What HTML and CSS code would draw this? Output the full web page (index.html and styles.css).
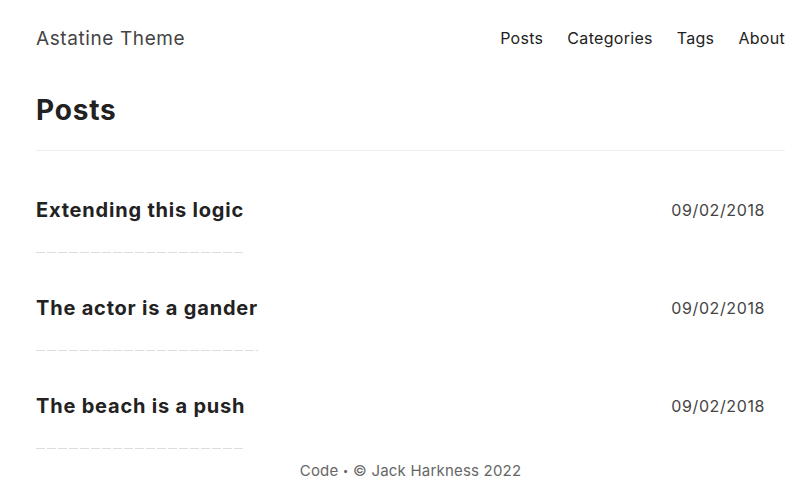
FILE: index.html
```html
<!DOCTYPE html>
<html>
<head>
<meta charset="utf-8">
<link rel="stylesheet" href="styles.css">
</head>
<body>
<div class="page">
  <header class="site-header">
    <a class="brand" href="#">Astatine Theme</a>
    <nav class="nav">
      <a href="#">Posts</a>
      <a href="#">Categories</a>
      <a href="#">Tags</a>
      <a href="#">About</a>
    </nav>
  </header>
  <main>
    <h1 class="page-title">Posts</h1>
    <ul class="post-list">
      <li class="post">
        <div class="post-main"><a class="post-title" href="#">Extending this logic</a></div>
        <span class="post-date">09/02/2018</span>
      </li>
      <li class="post">
        <div class="post-main"><a class="post-title" href="#">The actor is a gander</a></div>
        <span class="post-date">09/02/2018</span>
      </li>
      <li class="post">
        <div class="post-main"><a class="post-title" href="#">The beach is a push</a></div>
        <span class="post-date">09/02/2018</span>
      </li>
    </ul>
  </main>
  <footer class="site-footer"><a href="#">Code</a> <span class="dot">•</span> © Jack Harkness 2022</footer>
</div>
</body>
</html>
```

FILE: styles.css
```css
* { box-sizing: border-box; }
html, body { margin: 0; padding: 0; background: #fff; }
body {
  font-family: Inter, "Noto Sans", sans-serif;
  color: #222;
}
a { text-decoration: none; color: inherit; }
.page {
  padding: 0 22px 0 36px;
}
.site-header {
  height: 76px;
  display: flex;
  align-items: center;
  justify-content: space-between;
}
.brand {
  font-size: 19px;
  color: #444;
  letter-spacing: 0.6px;
}
.nav {
  display: flex;
  gap: 24px;
  font-size: 16px;
  letter-spacing: 0.3px;
  color: #222;
}
.page-title {
  margin: 0;
  padding: 16px 0 22px;
  font-size: 28px;
  font-weight: 700;
  line-height: 36px;
  letter-spacing: 0.8px;
  border-bottom: 1px solid #eee;
}
.post-list {
  list-style: none;
  margin: 0;
  padding: 0;
}
.post {
  display: flex;
  justify-content: space-between;
  align-items: flex-start;
  height: 98px;
  padding-top: 45px;
}
.post-main { display: flex; }
.post-title {
  font-size: 20px;
  font-weight: 700;
  line-height: 28px;
  letter-spacing: 0.8px;
  padding-bottom: 29px;
  background-image: repeating-linear-gradient(to right, #ddd 0 9px, transparent 9px 11px);
  background-size: 100% 1px;
  background-position: left bottom;
  background-repeat: no-repeat;
}
.post-date {
  font-size: 16px;
  line-height: 28px;
  letter-spacing: 0.6px;
  color: #444;
  margin-right: 20px;
}
.site-footer {
  text-align: center;
  font-size: 15px;
  color: #666;
  letter-spacing: 0.2px;
  margin-top: 16px;
}
.dot {
  font-size: 10px;
  vertical-align: 2px;
}
```
